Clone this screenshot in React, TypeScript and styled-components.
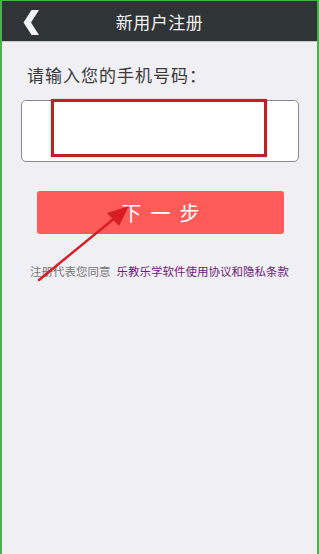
import React from "react";
import styled, { createGlobalStyle } from "styled-components";

const Global = createGlobalStyle`
  html, body { margin: 0; padding: 0; background: #f0eff4; }
  * { box-sizing: border-box; }
`;

const Frame = styled.div`
  position: relative;
  width: 319px;
  height: 554px;
  background: #f0eff4;
  border-left: 2px solid #4caf50;
  border-right: 2px solid #4caf50;
  border-top: 1px solid #4caf50;
  font-family: "Noto Sans CJK SC", "Noto Sans", sans-serif;
  overflow: hidden;
`;

const Header = styled.div`
  height: 41px;
  background: #2f3436;
  border-bottom: 1px solid #c9c9cc;
  display: flex;
  align-items: center;
  justify-content: center;
  position: relative;
`;

const Back = styled.svg`
  position: absolute;
  left: 20px;
  top: 9px;
`;

const Title = styled.div`
  color: #f2f2f2;
  font-size: 17px;
  letter-spacing: 0.5px;
`;

const Content = styled.div`
  display: flex;
  flex-direction: column;
  padding-top: 21px;
`;

const Label = styled.div`
  margin-left: 25px;
  font-size: 17px;
  line-height: 24px;
  color: #3a3a3a;
  letter-spacing: 1px;
`;

const InputBox = styled.div`
  position: relative;
  margin: 13px 18px 0 19px;
  height: 62px;
  background: #fff;
  border: 1px solid #8a8a8a;
  border-radius: 5px;
`;

const Mark = styled.div`
  position: absolute;
  left: 29px;
  top: -2px;
  width: 216px;
  height: 58px;
  border: 3px solid #c01e28;
  box-shadow: 0 0 1px rgba(192, 30, 40, 0.5);
`;

const Button = styled.div`
  margin: 29px 33px 0 35px;
  height: 43px;
  background: #ff5b5b;
  border-radius: 3px;
  display: flex;
  align-items: center;
  justify-content: center;
  color: #fff;
  font-size: 20px;
  letter-spacing: 9px;
  padding-left: 9px;
`;

const Terms = styled.div`
  margin-top: 29px;
  text-align: center;
  font-size: 11.5px;
  line-height: 16px;
  color: #777;
`;

const Link = styled.span`
  color: #6a2479;
  margin-left: 6px;
`;

const Arrow = styled.svg`
  position: absolute;
  left: 0;
  top: 0;
  pointer-events: none;
`;

export default function App() {
  return (
    <>
      <Global />
      <Frame>
        <Header>
          <Back width="18" height="25" viewBox="0 0 18 25">
            <polygon points="9.5,0 17,0 9,12.5 17,25 9.5,25 1.5,12.5" fill="#f4f4f4" />
          </Back>
          <Title>新用户注册</Title>
        </Header>
        <Content>
          <Label>请输入您的手机号码：</Label>
          <InputBox>
            <Mark />
          </InputBox>
          <Button>下一步</Button>
          <Terms>
            注册代表您同意<Link>乐教乐学软件使用协议和隐私条款</Link>
          </Terms>
        </Content>
        <Arrow width="319" height="554" viewBox="0 0 319 554">
          <line x1="37" y1="279" x2="114" y2="216" stroke="#d81e24" strokeWidth="2.4" strokeLinecap="round" />
          <polygon points="127,205 105,212 117,225" fill="#d81e24" />
        </Arrow>
      </Frame>
    </>
  );
}
